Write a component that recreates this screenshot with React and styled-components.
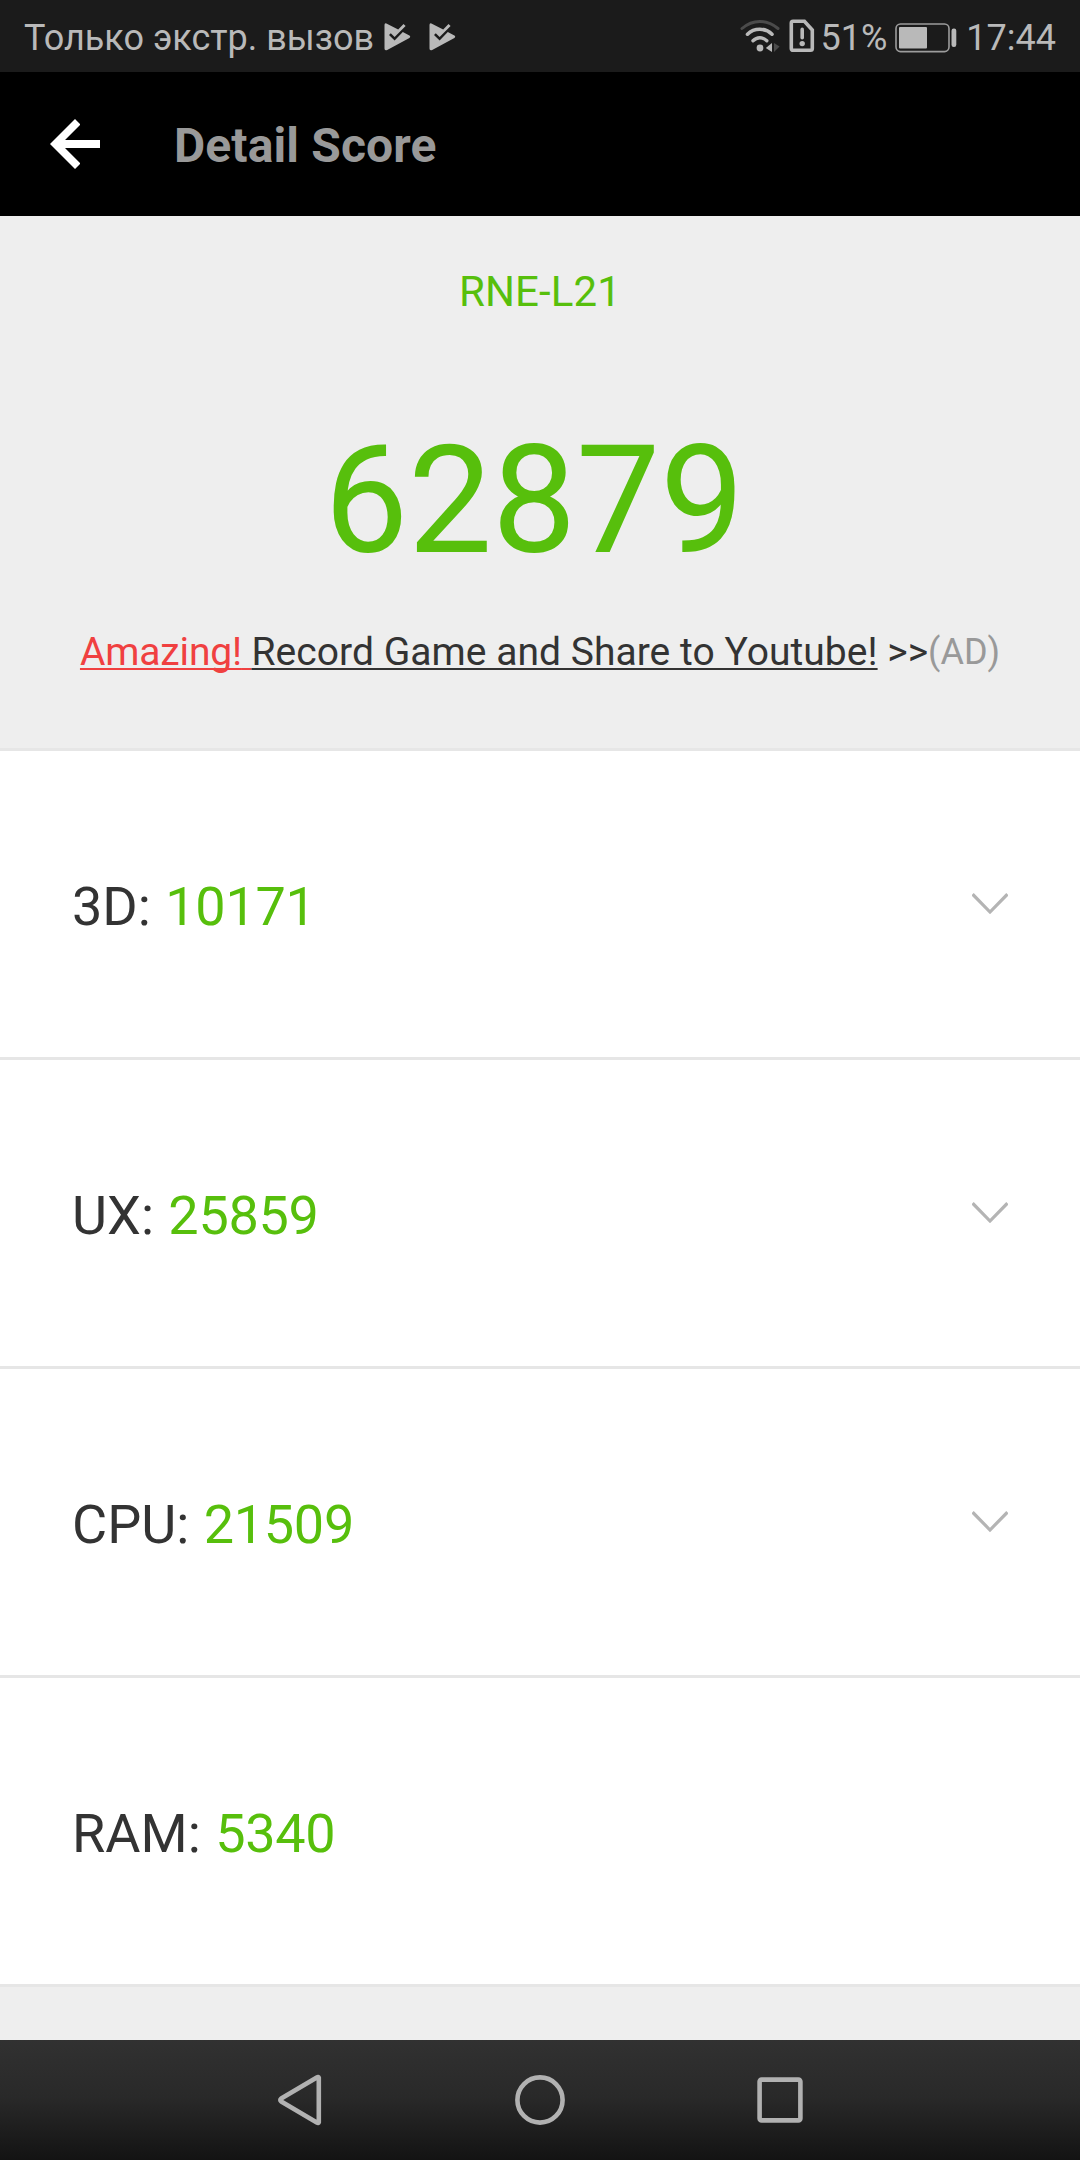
import React from 'react'
import styled, { createGlobalStyle } from 'styled-components'

const scores = [
  { label: '3D', value: 10171, expandable: true },
  { label: 'UX', value: 25859, expandable: true },
  { label: 'CPU', value: 21509, expandable: true },
  { label: 'RAM', value: 5340, expandable: false }
]

const PlayCheckIcon = () => (
  <svg width='27' height='28' viewBox='0 0 27 28'>
    <path
      d='M0.5 2Q0.5 -0.3 2.4 0.4L14.2 6.6L19.5 0.9L21.6 2.9L10.6 14L6.8 10.2L5 12L10.6 17.5L18.8 9.1L25.4 12.6Q27 13.7 25.4 15L3.2 26.9Q0.5 28 0.5 25.5Z'
      fill='#b9b9b9'
    />
  </svg>
)

const WifiIcon = () => (
  <svg width='40' height='34' viewBox='0 0 40 34'>
    <g fill='none' strokeLinecap='round' strokeWidth='3'>
      <path d='M2 9.5Q10 2.4 19.8 2.4T38 9.5' stroke='#4b4b4b' />
      <path
        d='M7.5 15.2Q12.5 10.3 19.8 10.3T32 15.2'
        stroke='#b9b9b9'
        strokeWidth='3.6'
      />
      <path
        d='M13 21.8Q16 18.8 19.8 18.8T26.8 21.8'
        stroke='#b9b9b9'
        strokeWidth='3.4'
      />
    </g>
    <circle cx='20' cy='29' r='3.4' fill='#b9b9b9' />
    <path d='M32 24V33L25.8 29Z' fill='#b9b9b9' />
    <path d='M34 24V33L39.6 27.5Z' fill='#4b4b4b' />
  </svg>
)

const SimAlertIcon = () => (
  <svg width='26' height='34' viewBox='0 0 26 34'>
    <path
      d='M4 2.2H15.4L23.3 11V29.5Q23.3 31.3 21.5 31.3H4.2Q2.3 31.3 2.3 29.5V4Q2.3 2.2 4 2.2Z'
      fill='none'
      stroke='#b9b9b9'
      strokeWidth='3.6'
    />
    <path
      d='M13.2 10.4V18.8'
      stroke='#b9b9b9'
      strokeWidth='3.6'
      strokeLinecap='round'
    />
    <circle cx='13.2' cy='24.6' r='2.7' fill='#b9b9b9' />
  </svg>
)

const BatteryIcon = () => (
  <svg width='62' height='30' viewBox='0 0 62 30'>
    <rect
      x='1'
      y='1'
      width='53'
      height='27.6'
      rx='4.5'
      fill='none'
      stroke='#9c9c9c'
      strokeWidth='1.6'
    />
    <rect x='4' y='4' width='28' height='21.6' rx='1' fill='#b9b9b9' />
    <rect x='56.5' y='5.5' width='4.8' height='18.5' rx='2.2' fill='#b9b9b9' />
  </svg>
)

const BackArrowIcon = () => (
  <svg width='50' height='50' viewBox='0 0 50 50'>
    <path
      d='M0 25L25 0L30 5V6L15 21H50V29H15L30 44V45L25 50Z'
      fill='#fff'
    />
  </svg>
)

const ChevronIcon = () => (
  <svg width='36' height='22' viewBox='0 0 36 22'>
    <path
      d='M0.6 1.2L18 19L35.4 1.2'
      fill='none'
      stroke='#b4b4b4'
      strokeWidth='3.2'
    />
  </svg>
)

const App = () => (
  <Screen>
    <GlobalStyle />
    <StatusBar>
      <Carrier>Только экстр. вызов</Carrier>
      <Notifications>
        <PlayCheckIcon />
        <PlayCheckIcon />
      </Notifications>
      <SystemIcons>
        <SignalIcons>
          <WifiIcon />
          <SimAlertIcon />
        </SignalIcons>
        <BatteryLevel>51%</BatteryLevel>
        <BatteryIcon />
        <Clock>17:44</Clock>
      </SystemIcons>
    </StatusBar>

    <AppBar>
      <BackButton aria-label='Back'>
        <BackArrowIcon />
      </BackButton>
      <Title>Detail Score</Title>
    </AppBar>

    <Summary>
      <Device>RNE-L21</Device>
      <Total>62879</Total>
      <Promo>
        <PromoLink $color='#f04040' $spacing='-0.15px'>
          Amazing!{' '}
        </PromoLink>
        <PromoLink $color='#333' $spacing='0.04px'>
          Record Game and Share to Youtube!
        </PromoLink>
        {' >>'}
        <AdTag>(AD)</AdTag>
      </Promo>
    </Summary>

    <ScoreList>
      {scores.map(({ label, value, expandable }) => (
        <ScoreRow key={label}>
          <ScoreText>
            {label}: <ScoreValue>{value}</ScoreValue>
          </ScoreText>
          {expandable && <ChevronIcon />}
        </ScoreRow>
      ))}
    </ScoreList>

    <NavBar>
      <NavButton aria-label='Back'>
        <svg width='50' height='56' viewBox='0 0 50 56'>
          <path
            d='M43.8 5.8Q43.4 4.5 41.8 5.4L6.2 26.6Q4.4 28 6.2 29.4L41.8 50.6Q43.4 51.5 43.8 50.2Z'
            fill='none'
            stroke='#b1b1b1'
            strokeWidth='4.6'
            strokeLinejoin='round'
          />
        </svg>
      </NavButton>
      <NavButton aria-label='Home'>
        <svg width='50' height='50' viewBox='0 0 50 50'>
          <circle
            cx='25'
            cy='25'
            r='22.6'
            fill='none'
            stroke='#b1b1b1'
            strokeWidth='4.6'
          />
        </svg>
      </NavButton>
      <NavButton aria-label='Recent apps'>
        <svg width='46' height='46' viewBox='0 0 46 46'>
          <rect
            x='2.6'
            y='2.6'
            width='40.8'
            height='40.8'
            rx='2'
            fill='none'
            stroke='#b1b1b1'
            strokeWidth='4.6'
          />
        </svg>
      </NavButton>
    </NavBar>
  </Screen>
)

export default App

const GlobalStyle = createGlobalStyle`
  body {
    margin: 0;
    background: #eee;
  }

  * {
    box-sizing: border-box;
  }

  svg {
    display: block;
    flex: none;
  }
`

const Screen = styled.div`
  display: flex;
  flex-direction: column;
  width: 1080px;
  height: 2160px;
  overflow: hidden;
  background: #eee;
  color: #333;
  font-family: Roboto, sans-serif;
  white-space: nowrap;
`

const StatusBar = styled.header`
  display: flex;
  align-items: center;
  height: 72px;
  padding: 3px 24px 0;
  background: #1b1b1b;
  color: #b9b9b9;
  font-size: 36px;
  line-height: 42px;
`

const Carrier = styled.span`
  margin-right: 10px;
`

const Notifications = styled.div`
  display: flex;
  gap: 18px;
  padding-bottom: 1px;
`

const SystemIcons = styled.div`
  display: flex;
  align-items: center;
  margin-left: auto;
`

const SignalIcons = styled.div`
  display: flex;
  gap: 9px;
  padding-bottom: 3px;
`

const BatteryLevel = styled.span`
  margin: 0 8px 0 6px;
`

const Clock = styled.span`
  margin-left: 9px;
`

const AppBar = styled.div`
  display: flex;
  align-items: center;
  height: 144px;
  padding-left: 50px;
  background: #000;
`

const BackButton = styled.button`
  margin: 0;
  padding: 0;
  border: 0;
  background: none;
`

const Title = styled.h1`
  margin: 3px 0 0 74px;
  color: #999;
  font-size: 48px;
  font-weight: 700;
  letter-spacing: 0.12px;
  line-height: 56px;
`

const Summary = styled.section`
  display: flex;
  flex-direction: column;
  align-items: center;
  height: 535px;
  padding-top: 51px;
  border-bottom: 3px solid #e6e6e6;
`

const Device = styled.div`
  color: #57bf0c;
  font-size: 42px;
  letter-spacing: 0.15px;
  line-height: 50px;
`

const Total = styled.div`
  margin: 96px 12px 0 0;
  color: #57bf0c;
  font-size: 150px;
  letter-spacing: -0.3px;
  line-height: 176px;
`

const Promo = styled.p`
  margin: 40px 0 0;
  font-size: 39px;
  line-height: 46px;
`

const PromoLink = styled.span`
  color: ${props => props.$color};
  letter-spacing: ${props => props.$spacing};
  text-decoration: underline;
  text-decoration-thickness: 2px;
  text-decoration-skip-ink: none;
  text-underline-offset: 3px;
`

const AdTag = styled.span`
  color: #999;
  font-size: 36px;
  line-height: 1;
  vertical-align: 1px;
`

const ScoreList = styled.div`
  display: flex;
  flex-direction: column;
`

const ScoreRow = styled.div`
  display: flex;
  align-items: center;
  justify-content: space-between;
  height: 309px;
  padding: 0 72px;
  border-bottom: 3px solid #e6e6e6;
  background: #fff;
`

const ScoreText = styled.div`
  padding-top: 6px;
  font-size: 54px;
  line-height: 64px;
`

const ScoreValue = styled.span`
  margin-left: 1px;
  color: #57bf0c;
  letter-spacing: -0.3px;
`

const NavBar = styled.nav`
  display: flex;
  justify-content: center;
  height: 120px;
  margin-top: auto;
  background: linear-gradient(#313131, #292929 48%, #191919 86%, #131313);
`

const NavButton = styled.button`
  display: flex;
  align-items: center;
  justify-content: center;
  width: 240px;
  padding: 0;
  border: 0;
  background: none;
`
